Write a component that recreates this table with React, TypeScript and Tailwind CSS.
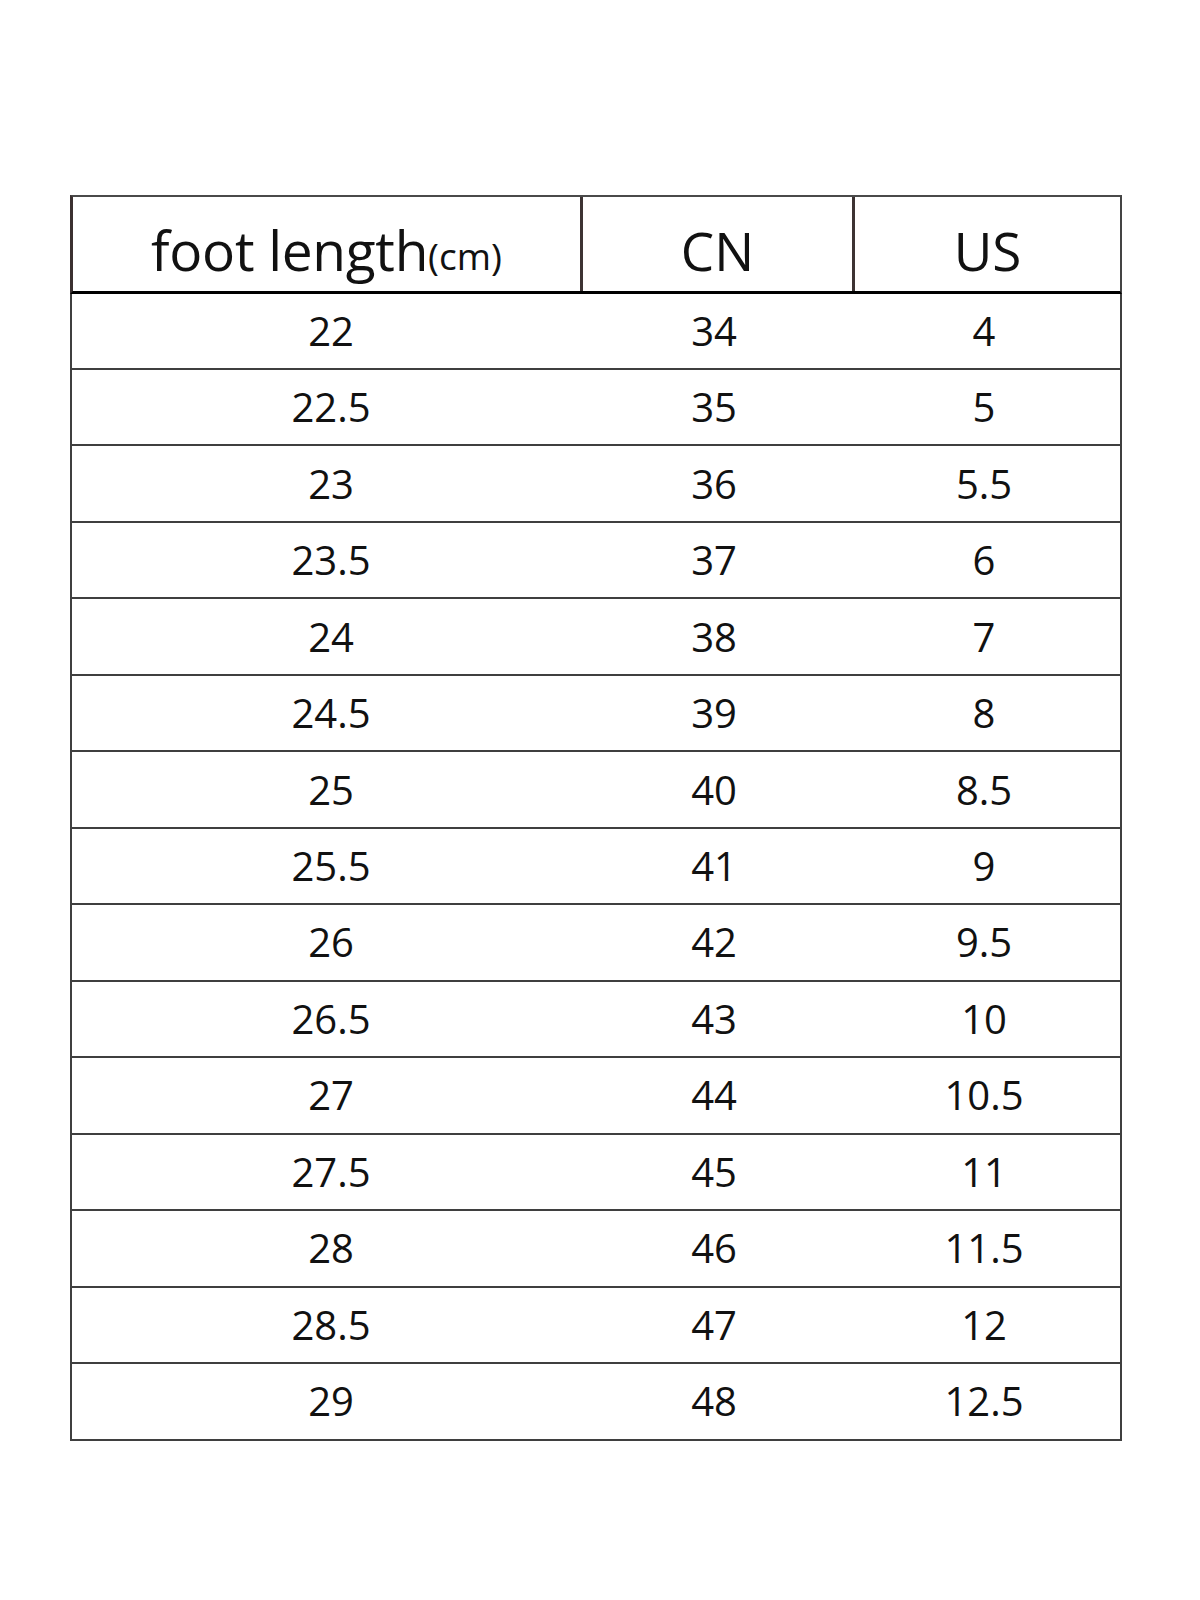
const rows: [string, string, string][] = [
  ['22', '34', '4'],
  ['22.5', '35', '5'],
  ['23', '36', '5.5'],
  ['23.5', '37', '6'],
  ['24', '38', '7'],
  ['24.5', '39', '8'],
  ['25', '40', '8.5'],
  ['25.5', '41', '9'],
  ['26', '42', '9.5'],
  ['26.5', '43', '10'],
  ['27', '44', '10.5'],
  ['27.5', '45', '11'],
  ['28', '46', '11.5'],
  ['28.5', '47', '12'],
  ['29', '48', '12.5'],
];

const cellPad = ['', 'pr-[10px]', ''];

const App = () => {
  return (
    <div className="min-h-[1600px] bg-white pt-[195px] pl-[70px] text-[#111] font-['Open_Sans','Noto_Sans',sans-serif]">
      <div className="w-[1052px]">
        {/* Header */}
        <div className="grid grid-cols-[510px_272px_1fr] h-[98.5px] border-t-2 border-t-[#4a4a4a] border-l-[3px] border-l-[#3b3131] border-r-2 border-r-[#444] border-b-[3px] border-b-black">
          <div className="border-r-[3px] border-[#3d3333] flex justify-center items-start pt-[25px] leading-none">
            <span className="text-[55px] tracking-[-0.3px]">foot length</span>
            <span className="text-[37px] mt-[15px]">(cm)</span>
          </div>
          <div className="border-r-[3px] border-[#3d3333] flex justify-center items-start pt-[27px] leading-none text-[53px]">
            CN
          </div>
          <div className="flex justify-center items-start pt-[27px] leading-none text-[53px]">
            US
          </div>
        </div>

        {/* Body */}
        {rows.map((r, i) => (
          <div
            key={i}
            className="grid grid-cols-[518px_258px_1fr] h-[76.47px] border-x-2 border-b-2 border-[#3f3f3f] text-[40px] leading-none"
          >
            {r.map((v, j) => (
              <div key={j} className={`flex items-center justify-center ${cellPad[j]}`}>
                {v}
              </div>
            ))}
          </div>
        ))}
      </div>
    </div>
  );
};

export default App;
